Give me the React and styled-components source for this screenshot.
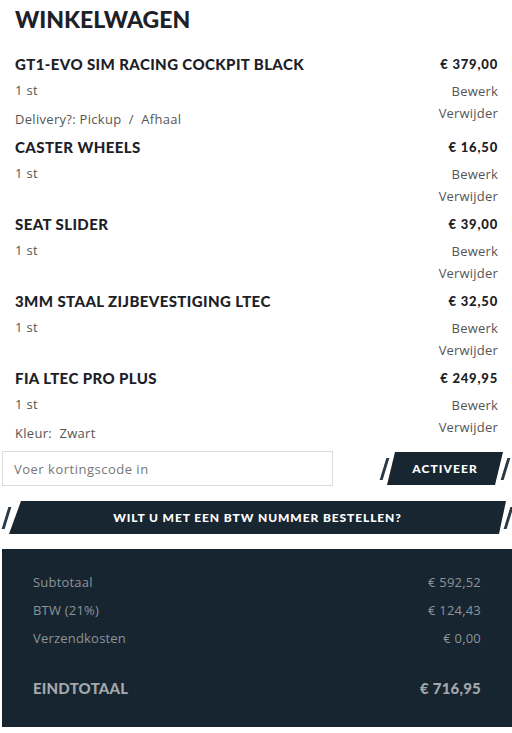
import React from 'react'
import styled, { createGlobalStyle } from 'styled-components'

const GlobalStyle = createGlobalStyle`
  html, body {
    margin: 0;
    padding: 0;
    background: #fff;
  }
  body {
    font-family: "Open Sans", "Liberation Sans", sans-serif;
    color: #555;
  }
`

const items = [
  { title: 'GT1-EVO SIM RACING COCKPIT BLACK', price: '€ 379,00', qty: '1 st', option: 'Delivery?: Pickup  /  Afhaal' },
  { title: 'CASTER WHEELS', price: '€ 16,50', qty: '1 st' },
  { title: 'SEAT SLIDER', price: '€ 39,00', qty: '1 st' },
  { title: '3MM STAAL ZIJBEVESTIGING LTEC', price: '€ 32,50', qty: '1 st' },
  { title: 'FIA LTEC PRO PLUS', price: '€ 249,95', qty: '1 st', option: 'Kleur:  Zwart' }
]

const totals = [
  { label: 'Subtotaal', value: '€ 592,52' },
  { label: 'BTW (21%)', value: '€ 124,43' },
  { label: 'Verzendkosten', value: '€ 0,00' }
]

export default function App () {
  return (
    <Cart>
      <GlobalStyle />
      <Heading>WINKELWAGEN</Heading>
      <ItemList>
        {items.map(item => (
          <Item key={item.title}>
            <Info>
              <ItemTitle>{item.title}</ItemTitle>
              <Qty>{item.qty}</Qty>
              {item.option && <Option>{item.option}</Option>}
            </Info>
            <Side>
              <Price>{item.price}</Price>
              <Action first>Bewerk</Action>
              <Action>Verwijder</Action>
            </Side>
          </Item>
        ))}
      </ItemList>

      <CouponRow>
        <CouponInput placeholder='Voer kortingscode in' />
        <SlashGroup>
          <Slash />
          <ActivateButton>ACTIVEER</ActivateButton>
          <Slash />
        </SlashGroup>
      </CouponRow>

      <VatRow>
        <Slash />
        <VatButton>WILT U MET EEN BTW NUMMER BESTELLEN?</VatButton>
        <Slash />
      </VatRow>

      <Summary>
        {totals.map(row => (
          <SumRow key={row.label}>
            <span>{row.label}</span>
            <span>{row.value}</span>
          </SumRow>
        ))}
        <GrandRow>
          <span>EINDTOTAAL</span>
          <span>€ 716,95</span>
        </GrandRow>
      </Summary>
    </Cart>
  )
}

const heavy = `
  font-family: Lato, "Liberation Sans", sans-serif;
  font-weight: 900;
`

const Cart = styled.div`
  width: 510px;
  padding-left: 2px;
`

const Heading = styled.h1`
  ${heavy}
  font-size: 23px;
  line-height: 28px;
  color: #1d2127;
  margin: 5px 0 21px 13px;
`

const ItemList = styled.div`
  padding: 0 14px 0 13px;
`

const Item = styled.div`
  display: flex;
  justify-content: space-between;
  padding-bottom: 7px;
`

const Info = styled.div`
  display: flex;
  flex-direction: column;
`

const ItemTitle = styled.div`
  ${heavy}
  font-size: 15px;
  line-height: 20px;
  letter-spacing: 0.4px;
  color: #1d2127;
`

const Qty = styled.div`
  font-size: 13px;
  line-height: 22px;
  letter-spacing: 0.3px;
  margin-top: 5px;
`

const Option = styled.div`
  font-size: 13px;
  line-height: 22px;
  letter-spacing: 0.3px;
  margin-top: 7px;
  white-space: pre;
`

const Side = styled.div`
  display: flex;
  flex-direction: column;
  align-items: flex-end;
`

const Price = styled.div`
  ${heavy}
  font-size: 13px;
  line-height: 20px;
  letter-spacing: 0.8px;
  color: #1d2127;
`

const Action = styled.div`
  font-size: 13px;
  line-height: 22px;
  letter-spacing: 0.2px;
  margin-top: ${p => (p.first ? '6px' : '0')};
  cursor: pointer;
`

const CouponRow = styled.div`
  display: flex;
  align-items: center;
  justify-content: space-between;
  padding-right: 5px;
`

const CouponInput = styled.input`
  box-sizing: border-box;
  width: 331px;
  height: 35px;
  border: 1px solid #dcdcdc;
  padding: 0 11px;
  font-family: "Open Sans", "Liberation Sans", sans-serif;
  font-size: 13px;
  letter-spacing: 0.5px;
  color: #555;
  outline: none;
  &::placeholder {
    color: #777;
  }
`

const SlashGroup = styled.div`
  display: flex;
  align-items: center;
  gap: 1px;
`

const Slash = styled.span`
  display: block;
  flex: none;
  width: 3px;
  height: 22px;
  background: #2a3944;
  transform: skewX(-17deg);
`

const ActivateButton = styled.button`
  ${heavy}
  width: 116px;
  height: 33px;
  border: none;
  background: #182631;
  color: #fff;
  font-size: 12px;
  letter-spacing: 1.1px;
  clip-path: polygon(8px 0, 100% 0, calc(100% - 8px) 100%, 0 100%);
  cursor: pointer;
`

const VatRow = styled.div`
  display: flex;
  align-items: center;
  gap: 1px;
  margin: 15px 2px 15px 3px;
`

const VatButton = styled.button`
  ${heavy}
  flex: 1;
  height: 33px;
  border: none;
  background: #182631;
  color: #fff;
  font-size: 12px;
  letter-spacing: 0.9px;
  clip-path: polygon(12px 0, 100% 0, calc(100% - 7px) 100%, 0 100%);
  cursor: pointer;
`

const Summary = styled.div`
  background: #172530;
  padding: 19px 31px 25px;
  color: #8d9499;
`

const SumRow = styled.div`
  display: flex;
  justify-content: space-between;
  font-size: 13px;
  line-height: 28px;
  letter-spacing: 0.2px;
`

const GrandRow = styled(SumRow)`
  ${heavy}
  font-size: 15px;
  margin-top: 22px;
  color: #a3a8ac;
`
